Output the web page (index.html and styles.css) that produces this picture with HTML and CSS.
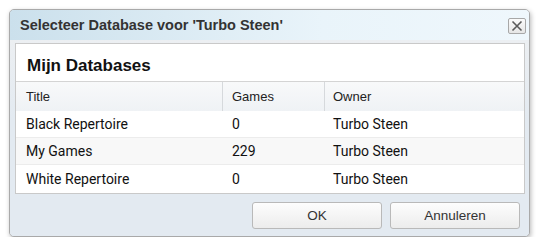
FILE: index.html
```html
<!DOCTYPE html>
<html>
<head>
<meta charset="utf-8">
<link rel="stylesheet" href="styles.css">
</head>
<body>
<div class="dialog">
  <div class="titlebar">
    <span class="title">Selecteer Database voor 'Turbo Steen'</span>
    <span class="close"><svg width="12" height="12" viewBox="0 0 12 12"><path d="M1.5 1.5 L10.5 10.5 M10.5 1.5 L1.5 10.5" stroke="#5a5a5a" stroke-width="1.6" fill="none"/></svg></span>
  </div>
  <div class="body">
    <div class="panel">
      <div class="heading">Mijn Databases</div>
      <div class="grid">
        <div class="row head">
          <div class="cell c1">Title</div>
          <div class="cell c2">Games</div>
          <div class="cell c3">Owner</div>
        </div>
        <div class="row">
          <div class="cell c1">Black Repertoire</div>
          <div class="cell c2">0</div>
          <div class="cell c3">Turbo Steen</div>
        </div>
        <div class="row alt">
          <div class="cell c1">My Games</div>
          <div class="cell c2">229</div>
          <div class="cell c3">Turbo Steen</div>
        </div>
        <div class="row">
          <div class="cell c1">White Repertoire</div>
          <div class="cell c2">0</div>
          <div class="cell c3">Turbo Steen</div>
        </div>
      </div>
    </div>
    <div class="footer">
      <button class="btn">OK</button>
      <button class="btn">Annuleren</button>
    </div>
  </div>
</div>
</body>
</html>
```
FILE: styles.css
```css
html, body { margin: 0; padding: 0; background: #fff; }
body { padding: 9px 0 0 9px; }
.dialog {
  width: 519px;
  height: 226px;
  border: 1px solid #a9a9a9;
  border-radius: 5px;
  box-shadow: 1px 2px 5px rgba(0,0,0,0.28);
  background: #e6ecf2;
  display: flex;
  flex-direction: column;
  overflow: hidden;
}
.titlebar {
  height: 30px;
  flex: none;
  background: linear-gradient(to right, #cbe0ec, #e9f4fa 60%, #eff7fc);
  display: flex;
  align-items: center;
  justify-content: space-between;
  padding: 0 3px 0 10px;
  box-sizing: border-box;
}
.title {
  font-family: "Liberation Sans", Arial, sans-serif;
  font-weight: bold;
  font-size: 14.5px;
  color: #333;
}
.close {
  width: 16px;
  height: 14px;
  border: 1px solid #a8a8a8;
  border-radius: 2px;
  background: linear-gradient(#fbfbfb, #e6e6e6);
  display: flex;
  align-items: center;
  justify-content: center;
  margin-top: 1px;
}
.body {
  flex: 1;
  display: flex;
  flex-direction: column;
  padding: 3px 4px 0 5px;
  background: linear-gradient(#eceff2, #e3eaf1 40%);
}
.panel {
  background: #fff;
  border: 1px solid #c9c9c9;
  height: 151px;
  box-sizing: border-box;
}
.heading {
  height: 37px;
  box-sizing: border-box;
  padding: 12px 0 0 11px;
  font-family: "Liberation Sans", Arial, sans-serif;
  font-weight: bold;
  font-size: 17px;
  color: #111;
}
.grid { border-top: 1px solid #d4d4d4; }
.row {
  display: flex;
  height: 27px;
  box-sizing: border-box;
  border-bottom: 1px solid #ececec;
  align-items: center;
  font-family: Roboto, "Liberation Sans", sans-serif;
  font-size: 14px;
  color: #111;
}
.row:last-child { border-bottom: none; height: 28px; }
.row.head {
  height: 29px;
  border-bottom: none;
  background: linear-gradient(#f8f9fa, #eff2f5);
  font-family: "Liberation Sans", Arial, sans-serif;
  font-size: 13px;
  color: #222;
}
.row.alt { background: #f8f8f8; }
.cell { box-sizing: border-box; height: 100%; display: flex; align-items: center; }
.c1 { width: 207px; padding-left: 10px; }
.c2 { width: 102px; padding-left: 9px; }
.c3 { flex: 1; padding-left: 8px; }
.head .c1, .head .c2 { border-right: 1px solid #d6d9dc; }
.footer {
  flex: 1;
  display: flex;
  justify-content: flex-end;
  align-items: flex-start;
  gap: 8px;
  padding: 8px 5px 0 0;
}
.btn {
  width: 130px;
  height: 27px;
  border: 1px solid #b9b9b9;
  border-radius: 3px;
  background: linear-gradient(#fdfdfd, #ececec);
  font-family: "Liberation Sans", Arial, sans-serif;
  font-size: 13.5px;
  color: #333;
  padding: 0;
}
```
